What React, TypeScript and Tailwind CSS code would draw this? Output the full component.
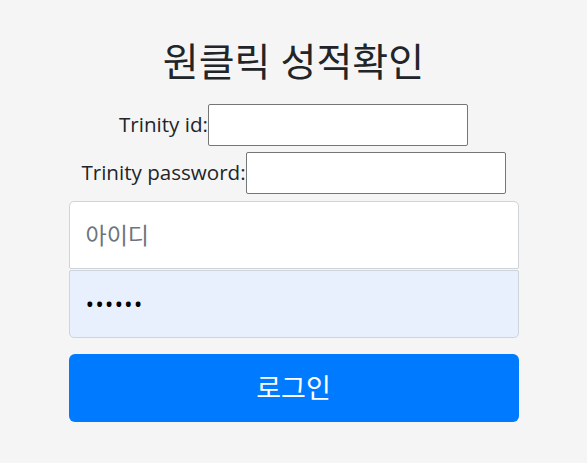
import React from "react";

const FONT = "'Open Sans', 'Noto Sans CJK KR', sans-serif";

export default function App() {
  return (
    <div className="min-h-[463px] bg-[#f5f5f5] text-[#212529]" style={{ fontFamily: FONT }}>
      <form className="w-[450px] mx-auto pt-[38px]" onSubmit={(e) => e.preventDefault()}>
        <h1 className="text-center text-[39px] leading-[1.2] font-normal mb-[19px]">원클릭 성적확인</h1>

        <div className="flex items-center justify-center h-[42px] text-[20.6px]">
          <label htmlFor="tid">Trinity id:</label>
          <input id="tid" className="w-[260px] h-[42px] bg-white border border-[#767676] rounded-[2px] outline-none px-1" />
        </div>
        <div className="flex items-center justify-center h-[42px] mt-[6px] text-[20.6px]">
          <label htmlFor="tpw">Trinity password:</label>
          <input id="tpw" type="password" className="w-[260px] h-[42px] bg-white border border-[#767676] rounded-[2px] outline-none px-1" />
        </div>

        <div className="mt-[7px]">
          <input
            placeholder="아이디"
            className="block w-full h-[68px] px-4 text-[23px] bg-white border border-[#ced4da] rounded-t-[5px] rounded-b-[2px] outline-none placeholder:text-[#6c757d]"
          />
          <input
            type="password"
            defaultValue="123456"
            className="block w-full h-[68px] mt-[1px] px-4 text-[23px] tracking-[1px] bg-[#e8f0fe] border border-[#ced4da] rounded-t-[2px] rounded-b-[5px] outline-none text-black"
          />
        </div>

        <button
          type="submit"
          className="mt-[16px] w-full h-[68px] bg-[#007bff] text-white text-[27px] rounded-[6px]"
        >
          로그인
        </button>
      </form>
    </div>
  );
}
